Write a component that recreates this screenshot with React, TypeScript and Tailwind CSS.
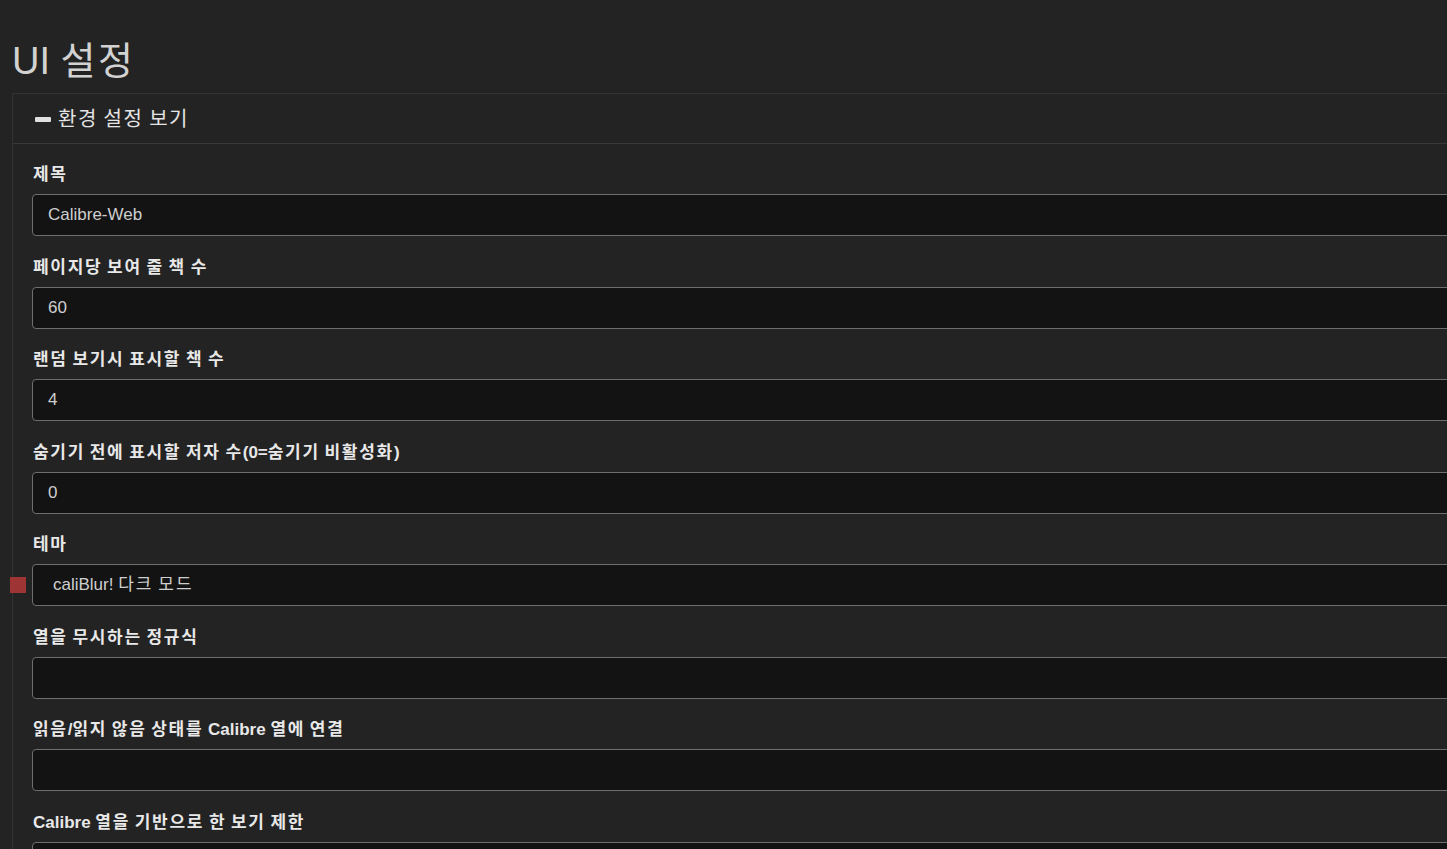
import React from 'react'

const font = { fontFamily: '"Liberation Sans", "Noto Sans CJK KR", sans-serif' }

type Field = { label: string; value: string; select?: boolean; marker?: boolean }

const fields: Field[] = [
  { label: '제목', value: 'Calibre-Web' },
  { label: '페이지당 보여 줄 책 수', value: '60' },
  { label: '랜덤 보기시 표시할 책 수', value: '4' },
  { label: '숨기기 전에 표시할 저자 수(0=숨기기 비활성화)', value: '0' },
  { label: '테마', value: 'caliBlur! 다크 모드', select: true, marker: true },
  { label: '열을 무시하는 정규식', value: '' },
  { label: '읽음/읽지 않음 상태를 Calibre 열에 연결', value: '' },
  { label: 'Calibre 열을 기반으로 한 보기 제한', value: '' },
]

// hangul glyphs in the reference font run wider, so space those runs out a bit
function Ko({ text, wide }: { text: string; wide: string }) {
  const parts = text.split(/([\uAC00-\uD7A3]+)/)
  return (
    <span>
      {parts.map((p, i) =>
        /[\uAC00-\uD7A3]/.test(p) ? (
          <span key={i} className={wide}>
            {p}
          </span>
        ) : (
          <React.Fragment key={i}>{p}</React.Fragment>
        )
      )}
    </span>
  )
}

function FieldRow({ field }: { field: Field }) {
  return (
    <div className="mb-[19.5px]">
      <label className="block h-[24px] leading-[24px] mb-[7px] text-[17px] font-bold text-[#e8e8e8] pl-px">
        <Ko text={field.label} wide="tracking-[0.1em]" />
      </label>
      <div className="relative">
        {field.marker && (
          <span className="absolute left-[-22px] top-[13px] w-[16px] h-[16px] bg-[#9e3434]" />
        )}
        <div
          className={`h-[42px] flex items-center rounded-[4px] border border-[#6e6e6e] bg-[#131313] text-[17px] text-[#cfcfcf] ${
            field.select ? 'pl-[20px]' : 'pl-[15px]'
          }`}
        >
          <Ko text={field.value} wide="tracking-[0.12em]" />
        </div>
      </div>
    </div>
  )
}

export default function App() {
  return (
    <div className="w-[1447px] h-[849px] overflow-hidden bg-[#232323]" style={font}>
      <div className="pl-[12px] w-[1520px]">
        <h1 className="pt-[40px] mb-[11px] text-[38px] leading-[42px] text-[#d2d2d2] font-normal">
          <Ko text="UI 설정" wide="tracking-[0.065em]" />
        </h1>
        <div className="border-l border-t border-[#333333] bg-[#232323]">
          <div className="h-[50px] flex items-center pl-[22px] pt-[1px] border-b border-[#383838]">
            <span className="w-[16px] h-[5px] bg-[#e0e0e0] rounded-[1px] mr-[7px]" />
            <span className="text-[20px] text-[#e4e4e4]">
              <Ko text="환경 설정 보기" wide="tracking-[0.08em]" />
            </span>
          </div>
          <div className="pt-[19px] pl-[19px]">
            {fields.map((f) => (
              <FieldRow key={f.label} field={f} />
            ))}
          </div>
        </div>
      </div>
    </div>
  )
}
